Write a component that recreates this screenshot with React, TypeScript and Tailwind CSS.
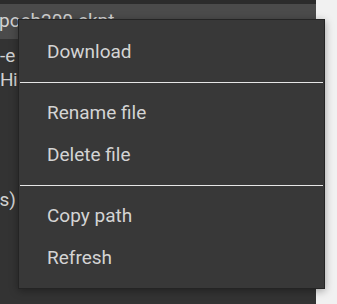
import React from "react"

const groups = [["Download"], ["Rename file", "Delete file"], ["Copy path", "Refresh"]]

function FileRows() {
  return (
    <div className="w-[316px] h-full bg-[#333333] text-[#d2d2d2] text-[19px] overflow-hidden">
      <div className="h-[4px] bg-[#2c2c2c]" />
      <div className="h-[35px] bg-[#4b4b4b] flex items-center">
        <span className="-ml-[11px] whitespace-nowrap">epoch200.ckpt</span>
      </div>
      <div className="h-[24px] mt-[5px] flex items-center">
        <span className="whitespace-nowrap">-e</span>
      </div>
      <div className="h-[24px] flex items-center">
        <span className="whitespace-nowrap tracking-[-0.5px]">High</span>
      </div>
      <div className="h-[24px] mt-[96px] flex items-center">
        <span className="-ml-[7px] whitespace-nowrap">(s)</span>
      </div>
    </div>
  )
}

function ContextMenu() {
  return (
    <div className="absolute left-[18px] top-[19px] w-[307px] bg-[#383838] border border-[#242424] pt-[11px] pb-[9px] shadow-[0_2px_8px_rgba(0,0,0,0.35)]">
      {groups.map((items, i) => (
        <div key={i}>
          {i > 0 && <div className="h-px mx-px my-[9px] bg-[#e6e6e6]" />}
          {items.map((label) => (
            <div
              key={label}
              className="h-[42px] pl-[28px] flex items-center text-[19px] text-[#d4d4d4]"
            >
              {label}
            </div>
          ))}
        </div>
      ))}
    </div>
  )
}

export default function App() {
  return (
    <div className="relative w-[337px] h-[304px] flex bg-[#f1f1f1] overflow-hidden font-['Roboto',sans-serif]">
      <FileRows />
      <ContextMenu />
    </div>
  )
}
